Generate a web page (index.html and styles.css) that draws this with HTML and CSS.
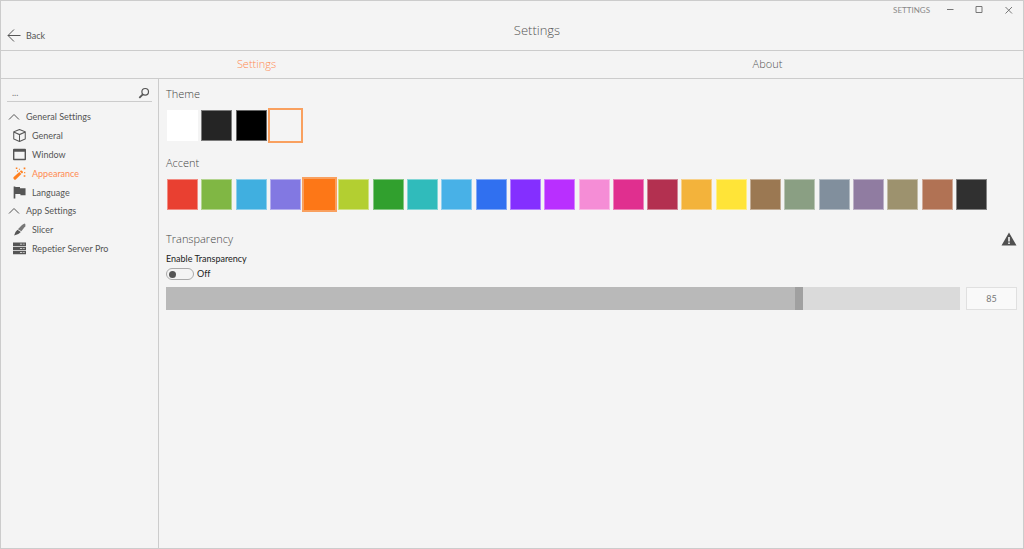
FILE: index.html
```
<!DOCTYPE html>
<html lang="en">
<head>
<meta charset="utf-8">
<title>Settings</title>
<link rel="stylesheet" href="styles.css">
</head>
<body>
<div class="window">
  <header class="header">
    <button class="back" type="button">
      <svg class="back-icon" viewBox="0 0 14 14"><path d="M13.500 6.500H1M7 .5L1 6.500l6 6"/></svg>
      Back
    </button>
    <h1 class="title">Settings</h1>
    <div class="caption">
      <span class="caption-text">SETTINGS</span>
      <button class="caption-button" type="button" aria-label="Minimize"><svg viewBox="0 0 8 8"><path d="M0 3.500h6.500"/></svg></button>
      <button class="caption-button" type="button" aria-label="Maximize"><svg viewBox="0 0 8 8"><path d="M0 .5h6v6H0z"/></svg></button>
      <button class="caption-button" type="button" aria-label="Close"><svg viewBox="0 0 8 8"><path d="M.5 1l6.500 6.500M7 1L.5 7.500"/></svg></button>
    </div>
  </header>
  <nav class="tabs">
    <a class="tab tab-active" href="#settings">Settings</a>
    <a class="tab" href="#about">About</a>
  </nav>
  <div class="body">
    <aside class="sidebar">
      <div class="search">
        <input class="search-input" type="text" placeholder="..." aria-label="Search settings">
        <button class="search-button" type="button" aria-label="Search">
          <svg viewBox="0 0 12 12"><circle cx="7.200" cy="4.800" r="3.300"/><path d="M4.800 7.400L1.300 10.800" stroke-width="1.800"/></svg>
        </button>
      </div>
      <button class="group" type="button"><svg class="chevron" viewBox="0 0 12 8"><path d="M1 6.500l5-5 5 5"/></svg>General Settings</button>
      <a class="item" href="#general"><svg class="icon" viewBox="0 0 14 14"><path d="M7 .5l6.200 2.600v7.600L7 13.500.8 10.700V3.100zM.8 3.300L7 6l6.200-2.700M7 6v7.200" fill="none" stroke="currentColor" stroke-width="1.100"/></svg>General</a>
      <a class="item" href="#window"><svg class="icon" viewBox="0 0 14 14"><path fill-rule="evenodd" d="M1 .8h12q1 0 1 1v10.400q0 1-1 1H1q-1 0-1-1V1.800q0-1 1-1zM1.500 4v7.700h11V4z"/></svg>Window</a>
      <a class="item item-active" href="#appearance"><svg class="icon" viewBox="0 0 14 14"><path d="M.5 11L6.800 5.400l2.200 2.200L3 13.400q-1 .6-2-.3-.9-.9-.5-2.100zM7.400 4.800l1-1q.7-.4 1.300.2l.8.8q.5.700 0 1.300l-.9.900zM3 .5h1.700v1.700H3zM6.300 1.800h1.200V3H6.300zM11.500.6h1.800v1.800h-1.800zM4.300 3.800h1.200V5H4.300zM11.500 8.800h1.800v1.800h-1.800zM12 5.500h1.200v1.200H12z"/></svg>Appearance</a>
      <a class="item" href="#language"><svg class="icon" viewBox="0 0 14 14"><path d="M.7.500h1.800v.5h5v1.500h6v7.500H8V8.500H2.500v5H.7z"/></svg>Language</a>
      <button class="group" type="button"><svg class="chevron" viewBox="0 0 12 8"><path d="M1 6.500l5-5 5 5"/></svg>App Settings</button>
      <a class="item" href="#slicer"><svg class="icon" viewBox="0 0 14 14"><path fill="#777" d="M12.800.5q1 1 .4 3L9 9 5.300 6.600l4.400-4.400Q11.700.5 12.800.5z"/><path d="M4.800 7.200L8.500 9.600Q6.300 12.200 1.200 13.500q.4-3.700 3.600-6.300z"/></svg>Slicer</a>
      <a class="item" href="#server"><svg class="icon" viewBox="0 0 14 14"><path fill-rule="evenodd" d="M0 .5h14v3.700H0zM0 5h14v3.700H0zM0 9.500h14v3.700H0zM7.500 2v.8H10V2zM11 2v.8h1.500V2zM7.500 6.500v.8H10v-.8zM11 6.500v.8h1.500v-.8zM7.500 11v.8H10V11zM11 11v.8h1.500V11z"/></svg>Repetier Server Pro</a>
    </aside>
    <main class="content">
      <h2 class="heading">Theme</h2>
      <div class="swatches theme-swatches" role="radiogroup" aria-label="Theme">
        <input class="swatch white" type="radio" name="theme" aria-label="White">
        <input class="swatch dark" type="radio" name="theme" aria-label="Dark">
        <input class="swatch black" type="radio" name="theme" aria-label="Black">
        <input class="swatch light" type="radio" name="theme" aria-label="Light" checked>
      </div>
      <h2 class="heading">Accent</h2>
      <div class="swatches accent-swatches" role="radiogroup" aria-label="Accent">
        <input class="swatch red" type="radio" name="accent" aria-label="Red">
        <input class="swatch green" type="radio" name="accent" aria-label="Green">
        <input class="swatch blue" type="radio" name="accent" aria-label="Blue">
        <input class="swatch purple" type="radio" name="accent" aria-label="Purple">
        <input class="swatch orange" type="radio" name="accent" aria-label="Orange" checked>
        <input class="swatch lime" type="radio" name="accent" aria-label="Lime">
        <input class="swatch emerald" type="radio" name="accent" aria-label="Emerald">
        <input class="swatch teal" type="radio" name="accent" aria-label="Teal">
        <input class="swatch cyan" type="radio" name="accent" aria-label="Cyan">
        <input class="swatch cobalt" type="radio" name="accent" aria-label="Cobalt">
        <input class="swatch indigo" type="radio" name="accent" aria-label="Indigo">
        <input class="swatch violet" type="radio" name="accent" aria-label="Violet">
        <input class="swatch pink" type="radio" name="accent" aria-label="Pink">
        <input class="swatch magenta" type="radio" name="accent" aria-label="Magenta">
        <input class="swatch crimson" type="radio" name="accent" aria-label="Crimson">
        <input class="swatch amber" type="radio" name="accent" aria-label="Amber">
        <input class="swatch yellow" type="radio" name="accent" aria-label="Yellow">
        <input class="swatch brown" type="radio" name="accent" aria-label="Brown">
        <input class="swatch olive" type="radio" name="accent" aria-label="Olive">
        <input class="swatch steel" type="radio" name="accent" aria-label="Steel">
        <input class="swatch mauve" type="radio" name="accent" aria-label="Mauve">
        <input class="swatch taupe" type="radio" name="accent" aria-label="Taupe">
        <input class="swatch sienna" type="radio" name="accent" aria-label="Sienna">
        <input class="swatch charcoal" type="radio" name="accent" aria-label="Charcoal">
      </div>
      <div class="heading-row">
        <h2 class="heading">Transparency</h2>
        <svg class="warning" viewBox="0 0 16 14" role="img" aria-label="Warning"><path fill-rule="evenodd" d="M8 .5L15.500 13.500H.5zM7.200 5v4.500h1.600V5zM7.200 10.500V12h1.600v-1.500z"/></svg>
      </div>
      <label class="label" for="transparency">Enable Transparency</label>
      <div class="toggle-row">
        <input class="toggle" id="transparency" type="checkbox" role="switch">
        <span>Off</span>
      </div>
      <div class="slider-row">
        <input class="slider" type="range" min="25" max="100" value="85" aria-label="Transparency level" style="--fill: 80%">
        <input class="value" type="text" value="85" aria-label="Transparency value">
      </div>
    </main>
  </div>
</div>
</body>
</html>
```
FILE: styles.css
```
* { box-sizing: border-box; }

body {
  margin: 0;
  background: #f4f4f4;
  color: #555;
  font: 9px/12px Lato, "Open Sans", sans-serif;
  font-variant-ligatures: none;
}

button, input { margin: 0; padding: 0; border: 0; background: none; color: inherit; font: inherit; font-variant-ligatures: none; }
a { color: inherit; text-decoration: none; }
h1, h2 { margin: 0; font-weight: 300; }
svg { display: block; flex: none; }

.window { display: flex; flex-direction: column; min-height: 100vh; border: 1px solid #ccc; }

.header { position: relative; display: flex; height: 50px; border-bottom: 1px solid #ccc; }
.back { display: flex; align-items: center; gap: 5px; width: 50px; padding: 20px 0 0 6px; }
.back-icon { width: 14px; height: 14px; fill: none; stroke: #555; }
.title, .tab, .heading { font-family: "Open Sans", sans-serif; font-weight: 300; }
.title { flex: 1; padding-top: 19px; font-size: 13px; line-height: 20px; text-align: center; }
.caption { position: absolute; top: 0; right: 0; display: flex; align-items: center; height: 18px; color: #888; font-size: 8px; }
.caption-text { margin-right: 6px; }
.caption-button { display: grid; place-items: center; width: 29px; height: 18px; }
.caption-button svg { width: 8px; height: 8px; fill: none; stroke: #777; overflow: visible; }

.tabs { display: flex; height: 28px; border-bottom: 1px solid #ccc; }
.tab { flex: 1; font-size: 11px; line-height: 26px; text-align: center; }
.tab-active { color: #ff8a50; }

.body { display: flex; flex: 1; }
.sidebar { width: 158px; border-right: 1px solid #ccc; }
.search { display: flex; align-items: center; height: 17px; margin: 6px; border-bottom: 1px solid #ccc; }
.search-input { flex: 1; min-width: 0; padding-left: 5px; outline: 0; }
.search-input::placeholder { color: #777; opacity: 1; }
.search-button svg { width: 12px; height: 12px; margin-right: 2px; fill: none; stroke: #555; stroke-width: 1.2; }
.group { display: flex; align-items: center; gap: 6px; width: 100%; height: 18px; padding-left: 7px; }
.chevron { width: 12px; height: 8px; fill: none; stroke: #555; }
.item { display: flex; align-items: center; gap: 6px; height: 19px; padding-left: 12px; }
.item-active { color: #ff8a50; }
.icon { width: 13px; height: 13px; fill: currentColor; }
.item-active .icon { color: #ff8020; }

.content { flex: 1; min-width: 0; padding: 6px 6px 6px 7px; }
.heading { font-size: 11px; line-height: 18px; color: #444; }
.swatches { display: flex; justify-content: space-between; max-width: 820px; height: 31px; margin-left: 1px; }
.theme-swatches { max-width: 134px; margin-top: 7px; margin-bottom: 13px; }
.accent-swatches { margin-top: 7px; margin-bottom: 20px; }
.swatch { appearance: none; flex: none; width: 31px; height: 31px; border: 1px solid rgb(255 255 255 / 40%); }
.swatch:checked { border-color: transparent; outline: 2px solid #f9a05f; }

.white { background: #fff; }
.dark { background: #252525; }
.black { background: #000; }
.light { background: #f4f4f4; }
.red { background: #e94031; }
.green { background: #80b744; }
.blue { background: #40afe0; }
.purple { background: #8278e2; }
.orange { background: #fd7717; }
.lime { background: #b3cf31; }
.emerald { background: #31a02e; }
.teal { background: #30bbbb; }
.cyan { background: #48b1e7; }
.cobalt { background: #3070f0; }
.indigo { background: #842fff; }
.violet { background: #b92fff; }
.pink { background: #f58dd6; }
.magenta { background: #e02f8f; }
.crimson { background: #b33050; }
.amber { background: #f3b33b; }
.yellow { background: #ffe438; }
.brown { background: #9b7852; }
.olive { background: #8a9f83; }
.steel { background: #818f9d; }
.mauve { background: #907ca1; }
.taupe { background: #9d926e; }
.sienna { background: #b17254; }
.charcoal { background: #303030; }

.heading-row { display: flex; align-items: center; justify-content: space-between; }
.warning { width: 16px; height: 14px; fill: #505050; }
.label { display: block; margin-top: 5px; color: #222; }
.toggle-row { display: flex; align-items: center; gap: 3px; height: 18px; color: #222; }
.toggle { appearance: none; display: flex; align-items: center; width: 28px; height: 12px; padding-left: 2px; border: 1px solid #aaa; border-radius: 6px; }
.toggle::before { content: ""; width: 7px; height: 7px; border-radius: 50%; background: #555; }
.toggle:checked { justify-content: flex-end; padding-right: 2px; }
.slider-row { display: flex; gap: 6px; height: 23px; margin-top: 4px; }
.slider { appearance: none; flex: 1; min-width: 0; height: 23px; background: linear-gradient(to right, #b9b9b9 var(--fill), #dadada var(--fill)); }
.slider::-webkit-slider-thumb { appearance: none; width: 8px; height: 23px; background: #a0a0a0; }
.value { width: 51px; border: 1px solid #e0e0e0; background: #f9f9f9; color: #777; text-align: center; }
```
